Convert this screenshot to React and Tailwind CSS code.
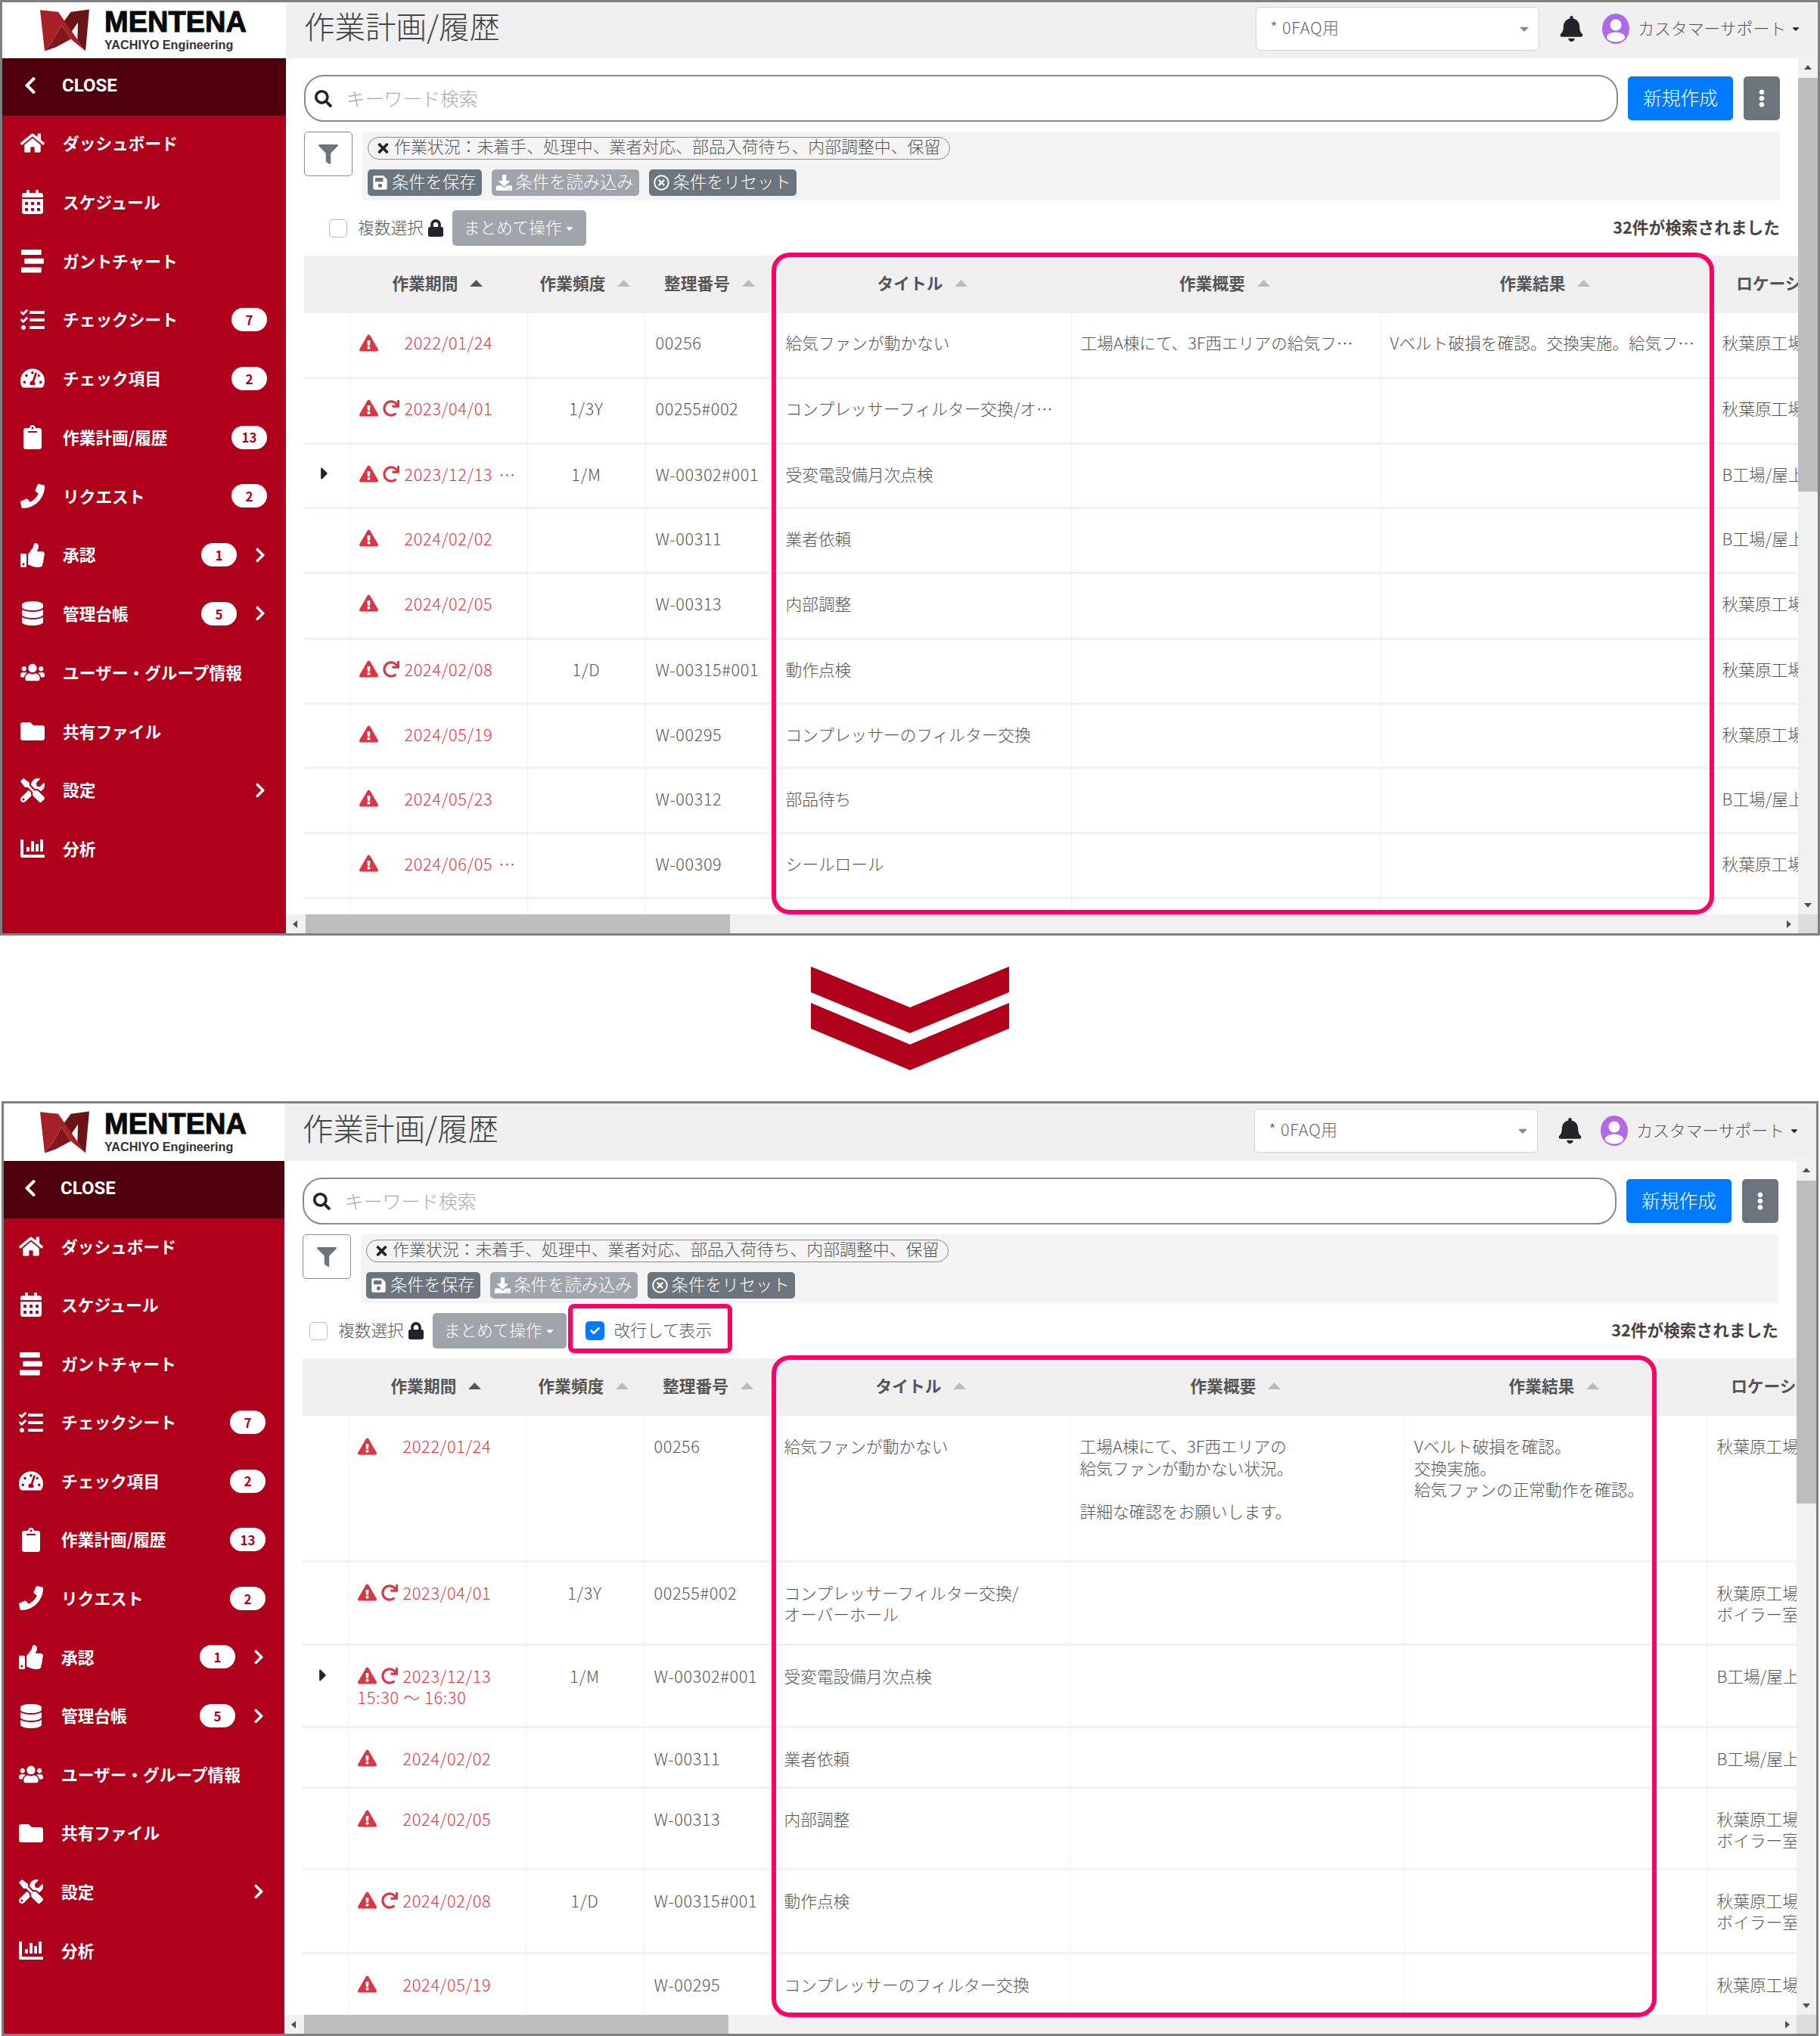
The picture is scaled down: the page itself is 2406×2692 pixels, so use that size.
import React from "react";
import {
  FaBell, FaCalendarAlt, FaCaretDown, FaCaretRight, FaChartBar, FaChevronLeft, FaChevronRight,
  FaClipboard, FaDatabase, FaDownload, FaEllipsisV, FaExclamationTriangle, FaFilter, FaFolder,
  FaHome, FaLock, FaPhone, FaRedo, FaRegTimesCircle, FaSave, FaSearch, FaTachometerAlt,
  FaTasks, FaThumbsUp, FaTimes, FaTools, FaUsers, FaCheck,
} from "react-icons/fa";

const Gantt = ({ className }) => (
  <svg viewBox="0 0 30 30" className={className} fill="currentColor">
    <rect x="1" y="1" width="25" height="6.5" rx="1" />
    <rect x="5" y="12" width="24" height="6.5" rx="1" />
    <rect x="1" y="23" width="25" height="6.5" rx="1" />
  </svg>
);

const nav = [
  { label: "ダッシュボード", icon: FaHome },
  { label: "スケジュール", icon: FaCalendarAlt },
  { label: "ガントチャート", icon: Gantt },
  { label: "チェックシート", icon: FaTasks, badge: "7" },
  { label: "チェック項目", icon: FaTachometerAlt, badge: "2" },
  { label: "作業計画/履歴", icon: FaClipboard, badge: "13" },
  { label: "リクエスト", icon: FaPhone, badge: "2" },
  { label: "承認", icon: FaThumbsUp, badge: "1", arrow: true },
  { label: "管理台帳", icon: FaDatabase, badge: "5", arrow: true },
  { label: "ユーザー・グループ情報", icon: FaUsers },
  { label: "共有ファイル", icon: FaFolder },
  { label: "設定", icon: FaTools, arrow: true },
  { label: "分析", icon: FaChartBar },
];

const rows = [
  {
    h1: "h-[85px]", h2: "h-[192px]", date: "2022/01/24", no: "00256",
    title: "給気ファンが動かない",
    summary: "工場A棟にて、3F西エリアの\n給気ファンが動かない状況。\n\n詳細な確認をお願いします。",
    result: "Vベルト破損を確認。\n交換実施。\n給気ファンの正常動作を確認。",
    loc: "秋葉原工場",
  },
  {
    h1: "h-[87px]", h2: "h-[110px]", redo: true, date: "2023/04/01", freq: "1/3Y", no: "00255#002",
    title: "コンプレッサーフィルター交換/\nオーバーホール",
    loc: "秋葉原工場\nボイラー室",
  },
  {
    h1: "h-[85px]", h2: "h-[109px]", expand: true, redo: true, date: "2023/12/13", more: "15:30 ～ 16:30",
    freq: "1/M", no: "W-00302#001", title: "受変電設備月次点検", loc: "B工場/屋上",
  },
  { h1: "h-[86px]", h2: "h-[80px]", date: "2024/02/02", no: "W-00311", title: "業者依頼", loc: "B工場/屋上" },
  { h1: "h-[87px]", h2: "h-[108px]", date: "2024/02/05", no: "W-00313", title: "内部調整", loc: "秋葉原工場\nボイラー室" },
  {
    h1: "h-[86px]", h2: "h-[111px]", redo: true, date: "2024/02/08", freq: "1/D", no: "W-00315#001",
    title: "動作点検", loc: "秋葉原工場\nボイラー室",
  },
  { h1: "h-[85px]", h2: "h-[90px]", date: "2024/05/19", no: "W-00295", title: "コンプレッサーのフィルター交換", loc: "秋葉原工場" },
];

const rowsBefore = [
  { h1: "h-[86px]", date: "2024/05/23", no: "W-00312", title: "部品待ち", loc: "B工場/屋上" },
  { h1: "h-[86px]", date: "2024/06/05", more: "09:00", no: "W-00309", title: "シールロール", loc: "秋葉原工場" },
  { h1: "h-[60px]" },
];

const columns = [
  { w1: "w-[61px]", w2: "w-[61px]" },
  { label: "作業期間", active: true, w1: "w-[234px]", w2: "w-[234px]" },
  { label: "作業頻度", w1: "w-[156px]", w2: "w-[156px]" },
  { label: "整理番号", w1: "w-[173px]", w2: "w-[173px]" },
  { label: "タイトル", w1: "w-[390px]", w2: "w-[390px]" },
  { label: "作業概要", w1: "w-[409px]", w2: "w-[442px]" },
  { label: "作業結果", w1: "w-[438px]", w2: "w-[400px]" },
  { label: "ロケーション", w1: "w-[230px]", w2: "w-[230px]" },
];

const Logo = () => (
  <div className="flex items-center justify-center gap-[20px] h-full pr-[2px]">
    <svg viewBox="0 0 195 165" className="w-[65px] h-[56px] shrink-0">
      <polygon points="195,0 122,10 92,50 122,92 150,52 148,122 180,165" fill="#6b1418" />
      <polygon points="85,62 122,118 62,150 18,165 52,122" fill="#7d171c" />
      <polygon points="0,2 72,10 180,165 122,118 85,62 52,122 18,165" fill="#a52126" />
    </svg>
    <div className="font-['Liberation_Sans',sans-serif] font-bold leading-none">
      <div className="text-[38px] text-[#0a0a0a] leading-[34px] [-webkit-text-stroke:1px_#0a0a0a]">MENTENA</div>
      <div className="text-[16.2px] text-[#333] leading-[20px] mt-[3px]">YACHIYO Engineering</div>
    </div>
  </div>
);

const Sidebar = ({ wrap }) => (
  <aside className={`${wrap ? "w-[371px]" : "w-[375px]"} shrink-0 flex flex-col bg-[#af001c] text-white`}>
    <div className={`${wrap ? "h-[76px]" : "h-[74px]"} bg-white shrink-0`}>
      <Logo />
    </div>
    <div className="h-[76px] bg-[#50000c] flex items-center shrink-0 pb-[4px] text-[24px] font-bold font-['Roboto',sans-serif]">
      <FaChevronLeft className={`w-[26px] h-[26px] ${wrap ? "ml-[22px]" : "ml-[24px]"}`} />
      <span className={wrap ? "ml-[27px]" : "ml-[29px]"}>CLOSE</span>
    </div>
    <nav className="flex flex-col">
      {nav.map((item) => (
        <div key={item.label} className={`${wrap ? "h-[77.6px] pl-[20px] pb-[4px]" : "h-[77.75px] pl-[24px] pb-[5px]"} flex items-center pr-[25px]`}>
          <span className="w-[32px] flex justify-center">
            <item.icon className="w-[32px] h-[32px]" />
          </span>
          <span className="ml-[24px] text-[21.7px] font-bold whitespace-nowrap">{item.label}</span>
          <span className={`ml-auto flex items-center ${item.arrow ? "mr-[-3px]" : ""}`}>
            {item.badge && (
              <span className="w-[47px] h-[31px] rounded-full bg-white text-[#af001c] text-[17px] font-bold flex items-center justify-center">
                {item.badge}
              </span>
            )}
            {item.arrow && <FaChevronRight className="w-[22px] h-[22px] ml-[20px] mr-[1px]" />}
          </span>
        </div>
      ))}
    </nav>
  </aside>
);

const TopBar = ({ wrap }) => (
  <header className={`${wrap ? "h-[76px]" : "h-[74px]"} shrink-0 bg-[#f0f0f0] flex items-center pl-[24px] pr-[22px]`}>
    <h1 className="text-[40.5px] font-light text-[#444] leading-none pb-[11px]">作業計画/履歴</h1>
    <div className="ml-auto w-[375px] h-[58px] bg-white border border-[#ced4da] rounded-[6px] flex items-center pl-[18px] pr-[10px] text-[21.7px] text-[#666] font-light mb-[4px]">
      <span className="tracking-[0.7px] pb-[3px]">* 0FAQ用</span>
      <FaCaretDown className="ml-auto w-[18px] h-[18px] text-[#888]" />
    </div>
    <FaBell className="ml-[27px] w-[31px] h-[34px] text-[#212529] mb-[4px]" />
    <svg viewBox="0 0 36 40" className="ml-[25px] w-[36px] h-[40px] mb-[4px]">
      <ellipse cx="18" cy="20" rx="18" ry="20" fill="#b06ae8" />
      <circle cx="18" cy="15" r="7.5" fill="#fff" />
      <ellipse cx="18" cy="31" rx="12" ry="6.5" fill="#fff" />
    </svg>
    <span className="ml-[11px] text-[21.8px] font-light text-[#555] whitespace-nowrap mb-[6px]">カスタマーサポート</span>
    <FaCaretDown className="ml-[6px] w-[14px] h-[14px] text-[#212529] mb-[4px]" />
  </header>
);

const GrayButton = ({ icon: Icon, children, faded }) => (
  <button className={`${faded ? "bg-[#a0a5ab]" : "bg-[#6c757d]"} h-[35px] rounded-[5px] text-white text-[22.3px] font-light flex items-center pl-[6px] pr-[7px] gap-[5px] whitespace-nowrap`}>
    <Icon className="w-[21px] h-[21px]" />
    <span className="pb-[3px]">{children}</span>
  </button>
);

const Toolbar = ({ wrap }) => (
  <div className="pl-[24px] pr-[24px] pt-[22px]">
    <div className="flex items-center">
      <div className="flex-1 h-[62px] border-2 border-[#8a8a8a] rounded-[26px] flex items-center pl-[12px]">
        <FaSearch className="w-[23px] h-[23px] text-[#212529]" />
        <input
          readOnly
          placeholder="キーワード検索"
          className="ml-[19px] flex-1 text-[24.8px] font-light outline-none placeholder:text-[#aaa]"
        />
      </div>
      <button className="ml-[13px] w-[139px] h-[58px] bg-[#007bff] rounded-[5px] text-white text-[24.8px] font-light pb-[2px]">新規作成</button>
      <button className="ml-[14px] w-[48px] h-[58px] bg-[#6c757d] rounded-[5px] text-white flex items-center justify-center">
        <FaEllipsisV className="w-[22px] h-[24px]" />
      </button>
    </div>

    <div className="flex mt-[13px]">
      <button className="w-[64px] h-[59px] border border-[#8a8a8a] rounded-[5px] flex items-center justify-center shrink-0">
        <FaFilter className="w-[26px] h-[26px] text-[#6c757d]" />
      </button>
      <div className="ml-[13px] flex-1 h-[91px] bg-[#f4f4f4] pl-[7px] pt-[7px]">
        <div className="w-fit h-[30px] border border-[#8a8a8a] rounded-full flex items-center pl-[11px] pr-[12px] text-[21.9px] font-light text-[#555] whitespace-nowrap">
          <FaTimes className="w-[17px] h-[20px] text-[#212529] mr-[6px]" />
          <span className="pb-[5px]">作業状況：未着手、処理中、業者対応、部品入荷待ち、内部調整中、保留</span>
        </div>
        <div className="flex gap-[13px] mt-[13px]">
          <GrayButton icon={FaSave}>条件を保存</GrayButton>
          <GrayButton icon={FaDownload} faded>条件を読み込み</GrayButton>
          <GrayButton icon={FaRegTimesCircle}>条件をリセット</GrayButton>
        </div>
      </div>
    </div>

    <div className={`flex items-center mt-[13px] h-[47px] ${wrap ? "pl-[9px]" : "pl-[33px]"}`}>
      <span className="w-[24px] h-[24px] bg-white border border-[#b9bec4] rounded-[5px]" />
      <span className="ml-[14px] text-[21.7px] font-light text-[#555] pb-[3px]">複数選択</span>
      <FaLock className="ml-[6px] w-[20px] h-[23px] text-[#212529]" />
      <button className="ml-[12px] w-[177px] h-[47px] bg-[#a0a5ab] rounded-[5px] text-white text-[21.6px] font-light flex items-center justify-center gap-[3px]">
        <span className="pb-[3px]">まとめて操作</span>
        <FaCaretDown className="w-[14px] h-[14px]" />
      </button>
      {wrap && (
        <>
          <span className="ml-[25px] w-[25px] h-[25px] bg-[#007bff] rounded-[5px] flex items-center justify-center text-white">
            <FaCheck className="w-[13px] h-[13px]" />
          </span>
          <span className="ml-[13px] text-[21.7px] font-light text-[#555] pb-[3px]">改行して表示</span>
        </>
      )}
      <span className="ml-auto text-[21.7px] font-bold text-[#444] pb-[3px]">32件が検索されました</span>
    </div>
  </div>
);

const SortHead = ({ label, active }) => (
  <div className="flex items-center justify-center gap-[16px] whitespace-nowrap pr-[3px] pb-[4px]">
    {label}
    {label && (
      <svg viewBox="0 0 17 9" className={`w-[17px] h-[9px] ${active ? "text-[#555]" : "text-[#bbb]"}`} fill="currentColor">
        <polygon points="8.5,0 17,9 0,9" />
      </svg>
    )}
  </div>
);

const DateCell = ({ row, wrap }) => (
  <div className="text-[#dc3545] font-light leading-[28.6px] tracking-[0.7px]">
    <div className="flex items-center h-[28.6px] whitespace-nowrap">
      <span className="w-[31px] shrink-0">
        {row.date && <FaExclamationTriangle className="w-[25px] h-[23px]" />}
      </span>
      <span className="w-[29px] shrink-0">{row.redo && <FaRedo className="w-[22px] h-[22px]" />}</span>
      {row.date}
      {!wrap && row.more && <span className="ml-[8px]">…</span>}
    </div>
    {wrap && row.more && <div>{row.more}</div>}
  </div>
);

const flat = (s) => (s || "").replace(/\n/g, "");

const DataTable = ({ wrap, data }) => {
  const pad = wrap ? "pt-[26px]" : "pt-[25px]";
  const cell = `border-r border-b-[3px] border-[#f1f1f1] align-top ${pad} px-[13px] font-light`;
  return (
    <div className="mt-[13px] ml-[24px] flex-1 min-h-0 overflow-hidden">
      <table className={`table-fixed ${wrap ? "w-[2086px]" : "w-[2091px]"} text-[21.7px] text-[#555] leading-[28.6px]`}>
        <colgroup>
          {columns.map((c, i) => (
            <col key={i} className={wrap ? c.w2 : c.w1} />
          ))}
        </colgroup>
        <thead>
          <tr className="h-[76px] bg-[#f0f0f0] font-bold">
            {columns.map((c, i) => (
              <th key={i} className="font-bold p-0">
                <SortHead label={c.label} active={c.active} />
              </th>
            ))}
          </tr>
        </thead>
        <tbody>
          {data.map((r, i) => (
            <tr key={i} className={wrap ? r.h2 : r.h1}>
              <td className={`border-b-[3px] border-r border-[#f1f1f1] align-top ${pad} text-[#212529]`}>
                {r.expand && <FaCaretRight className="ml-[16px] w-[22px] h-[26px]" />}
              </td>
              <td className={`border-r border-b-[3px] border-[#f1f1f1] align-top ${pad} px-[11px]`}>
                <DateCell row={r} wrap={wrap} />
              </td>
              <td className={`${cell} text-center tracking-[0.7px]`}>{r.freq}</td>
              <td className={`${cell} tracking-[0.6px]`}>{r.no}</td>
              {wrap ? (
                <>
                  <td className={`${cell} pl-[12px] whitespace-pre-line`}>{r.title}</td>
                  <td className={`${cell} whitespace-pre-line`}>{r.summary}</td>
                  <td className={`${cell} whitespace-pre-line`}>{r.result}</td>
                  <td className={`${cell} whitespace-pre-line`}>{r.loc}</td>
                </>
              ) : (
                <>
                  <td className={`${cell} pl-[12px] truncate`}>{flat(r.title)}</td>
                  <td className={`${cell} pl-[12px] truncate pr-[26px]`}>{flat(r.summary)}</td>
                  <td className={`${cell} pl-[12px] truncate`}>{flat(r.result)}</td>
                  <td className={`${cell} whitespace-nowrap`}>{(r.loc || "").split("\n")[0]}</td>
                </>
              )}
            </tr>
          ))}
        </tbody>
      </table>
    </div>
  );
};

const Triangle = ({ points }) => (
  <svg viewBox="0 0 12 12" className="w-[12px] h-[12px] text-[#505050]" fill="currentColor">
    <polygon points={points} />
  </svg>
);

const Window = ({ wrap, className, data }) => (
  <div className={`${className} border-[3px] border-[#808080] flex overflow-hidden`}>
    <Sidebar wrap={wrap} />
    <main className="flex-1 min-w-0 flex flex-col">
      <TopBar wrap={wrap} />
      <div className="flex-1 min-h-0 flex">
        <div className="flex-1 min-w-0 flex flex-col">
          <div className="flex-1 min-h-0 flex flex-col relative">
            <Toolbar wrap={wrap} />
            <DataTable wrap={wrap} data={data} />
            {wrap ? (
              <>
                <div className="absolute left-[375px] top-[189px] w-[217px] h-[65px] border-[6px] border-[#ff0066] rounded-[8px]" />
                <div className="absolute left-[644px] top-[257px] w-[1170px] h-[875px] border-[6px] border-[#ff0066] rounded-[24px]" />
              </>
            ) : (
              <div className="absolute left-[642px] top-[257px] w-[1246px] h-[875px] border-[6px] border-[#ff0066] rounded-[24px]" />
            )}
          </div>
          <div className="h-[25px] bg-[#f1f1f1] flex items-center shrink-0">
            <span className="w-[26px] flex justify-center"><Triangle points="8,1 8,11 2,6" /></span>
            <span className="w-[561px] h-full bg-[#bdbdbd]" />
            <span className="ml-auto w-[26px] flex justify-center"><Triangle points="4,1 4,11 10,6" /></span>
          </div>
        </div>
        <div className="w-[26px] shrink-0 bg-[#f1f1f1] flex flex-col">
          <span className="h-[26px] flex items-center justify-center"><Triangle points="1,8 11,8 6,2" /></span>
          <span className={`${wrap ? "h-[427px]" : "h-[547px]"} bg-[#bdbdbd]`} />
          <span className="mt-auto h-[26px] flex items-center justify-center"><Triangle points="1,4 11,4 6,10" /></span>
          <span className="h-[25px] bg-[#dcdcdc]" />
        </div>
      </div>
    </main>
  </div>
);

export default function App() {
  return (
    <div className="w-[2406px] h-[2692px] bg-white overflow-hidden font-['Noto_Sans_CJK_JP','Noto_Sans',sans-serif]">
      <Window className="w-[2406px] h-[1237px]" data={[...rows, ...rowsBefore]} />
      <div className="h-[219px] flex items-center justify-center">
        <svg viewBox="0 0 262 137" className="w-[262px] h-[137px]" fill="#af001c">
          <polygon points="0,0 131,54 262,0 262,34 131,88 0,34" />
          <polygon points="0,48 131,103 262,48 262,82 131,137 0,82" />
        </svg>
      </div>
      <Window wrap className="ml-[2px] w-[2402px] h-[1236px]" data={rows} />
    </div>
  );
}
